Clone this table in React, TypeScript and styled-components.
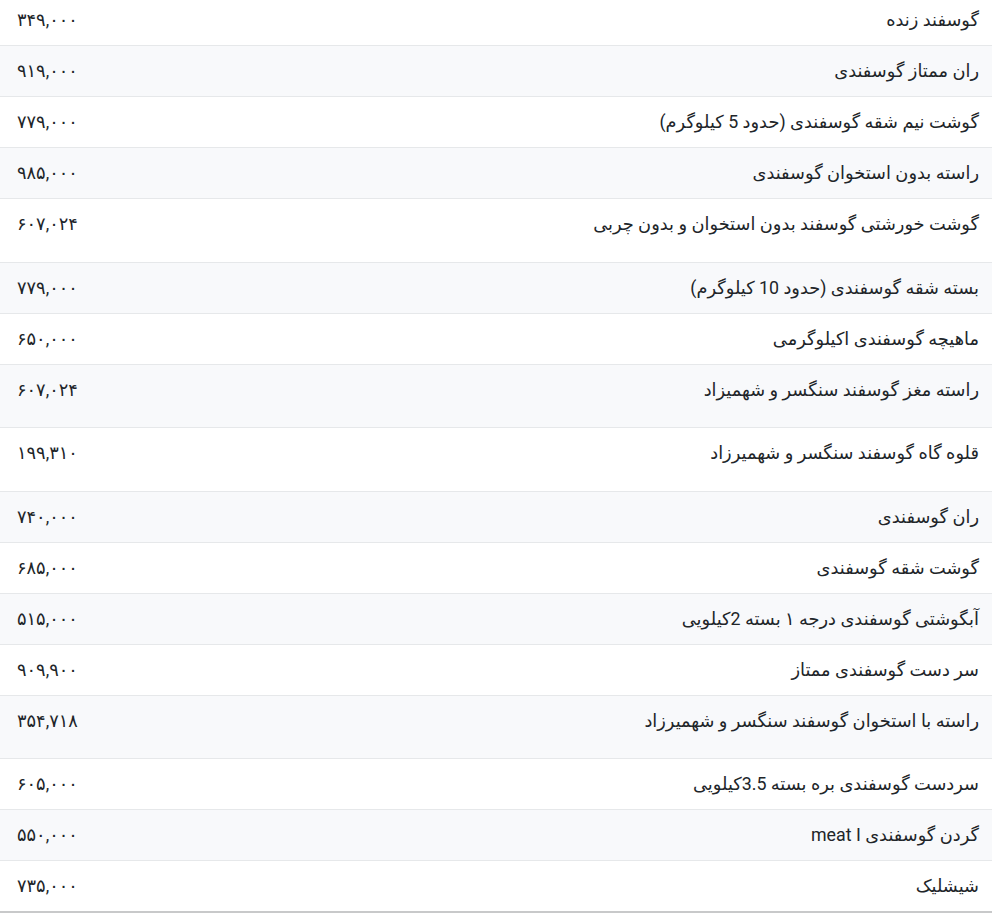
import React from 'react'
import styled, {createGlobalStyle} from 'styled-components'

const GlobalStyle = createGlobalStyle`
  html, body {
    margin: 0;
    padding: 0;
    background: #ffffff;
  }
  body {
    font-family: Roboto, "DejaVu Sans", sans-serif;
    color: #212529;
    overflow: hidden;
  }
`

interface PriceItem {
  name: string
  price: string
  tall?: boolean
}

const items: PriceItem[] = [
  {name: 'گوسفند زنده', price: '۳۴۹,۰۰۰'},
  {name: 'ران ممتاز گوسفندی', price: '۹۱۹,۰۰۰'},
  {name: 'گوشت نیم شقه گوسفندی (حدود 5 کیلوگرم)', price: '۷۷۹,۰۰۰'},
  {name: 'راسته بدون استخوان گوسفندی', price: '۹۸۵,۰۰۰'},
  {name: 'گوشت خورشتی گوسفند بدون استخوان و بدون چربی', price: '۶۰۷,۰۲۴', tall: true},
  {name: 'بسته شقه گوسفندی (حدود 10 کیلوگرم)', price: '۷۷۹,۰۰۰'},
  {name: 'ماهیچه گوسفندی اکیلوگرمی', price: '۶۵۰,۰۰۰'},
  {name: 'راسته مغز گوسفند سنگسر و شهمیزاد', price: '۶۰۷,۰۲۴', tall: true},
  {name: 'قلوه گاه گوسفند سنگسر و شهمیرزاد', price: '۱۹۹,۳۱۰', tall: true},
  {name: 'ران گوسفندی', price: '۷۴۰,۰۰۰'},
  {name: 'گوشت شقه گوسفندی', price: '۶۸۵,۰۰۰'},
  {name: 'آبگوشتی گوسفندی درجه ۱ بسته 2کیلویی', price: '۵۱۵,۰۰۰'},
  {name: 'سر دست گوسفندی ممتاز', price: '۹۰۹,۹۰۰'},
  {name: 'راسته با استخوان گوسفند سنگسر و شهمیرزاد', price: '۳۵۴,۷۱۸', tall: true},
  {name: 'سردست گوسفندی بره بسته 3.5کیلویی', price: '۶۰۵,۰۰۰'},
  {name: 'گردن گوسفندی meat I', price: '۵۵۰,۰۰۰'},
  {name: 'شیشلیک', price: '۷۳۵,۰۰۰'},
]

const PriceList: React.FC = () => {
  return (
    <Wrapper>
      <Table dir="rtl">
        <tbody>
          {items.map((item, i) => (
            <Row key={i} $striped={i % 2 === 1}>
              <NameCell $tall={item.tall}>{item.name}</NameCell>
              <PriceCell $tall={item.tall}>{item.price}</PriceCell>
            </Row>
          ))}
        </tbody>
      </Table>
    </Wrapper>
  )
}

const App: React.FC = () => (
  <>
    <GlobalStyle/>
    <PriceList/>
  </>
)

const Wrapper = styled.div`
  width: 992px;
  margin-top: -5px;
`

const Table = styled.table`
  width: 100%;
  border-collapse: collapse;
  border-bottom: 2px solid #c8c9ca;
  font-size: 17.8px;
  line-height: 26px;
`

const Row = styled.tr<{$striped: boolean}>`
  background: ${(props) => (props.$striped ? '#f8f9fb' : '#ffffff')};
  border-bottom: 1px solid #e6e8ea;
`

const NameCell = styled.td<{$tall?: boolean}>`
  text-align: right;
  vertical-align: top;
  color: #212529;
  padding: 12px 13px ${(props) => (props.$tall ? '24.5px' : '12px')} 12px;
`

const PriceCell = styled.td<{$tall?: boolean}>`
  text-align: left;
  vertical-align: top;
  white-space: nowrap;
  width: 1%;
  color: #212529;
  padding: 12px 17px ${(props) => (props.$tall ? '24.5px' : '12px')} 17px;
`

export default App
